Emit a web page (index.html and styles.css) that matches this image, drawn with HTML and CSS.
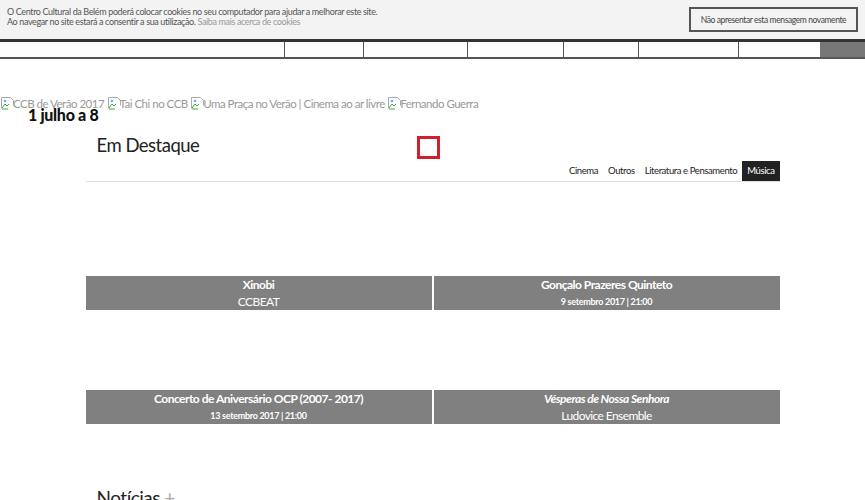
FILE: index.html
```html
<!DOCTYPE html>
<html lang="pt">
<head>
<meta charset="utf-8">
<title>CCB</title>
<link rel="stylesheet" href="styles.css">
</head>
<body>
<div class="cookie">
  <p class="cookie-text">O Centro Cultural da Belém poderá colocar cookies no seu computador para ajudar a melhorar este site.<br>Ao navegar no site estará a consentir a sua utilização. <a class="cookie-link" href="#">Saiba mais acerca de cookies</a></p>
  <button class="cookie-btn">Não apresentar esta mensagem novamente</button>
</div>
<nav class="nav">
  <span class="nav-cell c1"></span>
  <span class="nav-cell c2"></span>
  <span class="nav-cell c3"></span>
  <span class="nav-cell c4"></span>
  <span class="nav-cell c5"></span>
  <span class="nav-cell c6"></span>
  <span class="nav-cell c7"></span>
  <span class="nav-cell c8"></span>
</nav>
<div class="slider">
  <div class="strip">
    <span class="broken"><svg class="bi" viewBox="0 0 16 16" width="16" height="16"><path d="M1.5 1.5h9l3 3v5" fill="none" stroke="#aaa"/><path d="M1.5 1.5v11" fill="none" stroke="#aaa"/><path d="M2 12l3-4 2 2 2-2" fill="none" stroke="#4a4"/><path d="M2 13h6" stroke="#4a4"/><circle cx="5" cy="5" r="1.3" fill="#6af"/></svg>CCB de Verão 2017</span>
    <span class="broken"><svg class="bi" viewBox="0 0 16 16" width="16" height="16"><path d="M1.5 1.5h9l3 3v5" fill="none" stroke="#aaa"/><path d="M1.5 1.5v11" fill="none" stroke="#aaa"/><path d="M2 12l3-4 2 2 2-2" fill="none" stroke="#4a4"/><path d="M2 13h6" stroke="#4a4"/><circle cx="5" cy="5" r="1.3" fill="#6af"/></svg>Tai Chi no CCB</span>
    <span class="broken"><svg class="bi" viewBox="0 0 16 16" width="16" height="16"><path d="M1.5 1.5h9l3 3v5" fill="none" stroke="#aaa"/><path d="M1.5 1.5v11" fill="none" stroke="#aaa"/><path d="M2 12l3-4 2 2 2-2" fill="none" stroke="#4a4"/><path d="M2 13h6" stroke="#4a4"/><circle cx="5" cy="5" r="1.3" fill="#6af"/></svg>Uma Praça no Verão | Cinema ao ar livre</span>
    <span class="broken"><svg class="bi" viewBox="0 0 16 16" width="16" height="16"><path d="M1.5 1.5h9l3 3v5" fill="none" stroke="#aaa"/><path d="M1.5 1.5v11" fill="none" stroke="#aaa"/><path d="M2 12l3-4 2 2 2-2" fill="none" stroke="#4a4"/><path d="M2 13h6" stroke="#4a4"/><circle cx="5" cy="5" r="1.3" fill="#6af"/></svg>Fernando Guerra</span>
  </div>
  <div class="slide-caption">1 julho a 8</div>
</div>
<main class="main">
  <div class="section-head">
    <h2 class="section-title">Em Destaque</h2>
    <span class="red-box"></span>
  </div>
  <div class="tabs">
    <a class="tab" href="#">Cinema</a>
    <a class="tab" href="#">Outros</a>
    <a class="tab" href="#">Literatura e Pensamento</a>
    <a class="tab active" href="#">Música</a>
  </div>
  <div class="cards">
    <div class="card">
      <div class="card-img"></div>
      <div class="card-cap"><div class="cap-title">Xinobi</div><div class="cap-sub">CCBEAT</div></div>
    </div>
    <div class="card">
      <div class="card-img"></div>
      <div class="card-cap"><div class="cap-title">Gonçalo Prazeres Quinteto</div><div class="cap-date">9 setembro 2017 | 21:00</div></div>
    </div>
    <div class="card">
      <div class="card-img"></div>
      <div class="card-cap"><div class="cap-title">Concerto de Aniversário OCP (2007- 2017)</div><div class="cap-date">13 setembro 2017 | 21:00</div></div>
    </div>
    <div class="card">
      <div class="card-img"></div>
      <div class="card-cap"><div class="cap-title"><em>Vésperas de Nossa Senhora</em></div><div class="cap-sub">Ludovice Ensemble</div></div>
    </div>
  </div>
  <h2 class="section-title news">Notícias <span class="plus">+</span></h2>
</main>
</body>
</html>
```
FILE: styles.css
```css
* { box-sizing: border-box; }
body {
  margin: 0;
  font-family: Lato, "Open Sans", sans-serif;
  color: #222;
  background: #fff;
}
.cookie {
  background: #f3f3f3;
  height: 39px;
  display: flex;
  justify-content: space-between;
  align-items: flex-start;
  padding: 7px 7px 0 7px;
}
.cookie-text {
  margin: 0;
  font-size: 9px;
  line-height: 10px;
  letter-spacing: -0.37px;
  color: #555;
}
.cookie-link { color: #999; text-decoration: none; }
.cookie-btn {
  margin-top: 0;
  width: 169px;
  height: 25px;
  background: #f3f3f3;
  border: 2px solid #555;
  font-family: inherit;
  font-size: 8.5px;
  letter-spacing: -0.4px;
  color: #444;
  padding: 0;
}
.nav {
  display: flex;
  height: 20px;
  border-top: 3px solid #333;
  border-bottom: 2px solid #555;
}
.nav-cell { border-right: 1px solid #555; }
.c1 { width: 285px; }
.c2 { width: 79px; }
.c3 { width: 104px; }
.c4 { width: 96px; }
.c5 { width: 75px; }
.c6 { width: 100px; }
.c7 { width: 81px; border-right: 0; }
.c8 { flex: 1; background: #777; border-right: 0; }
.slider {
  position: relative;
  margin-top: 37px;
  height: 37px;
}
.strip {
  font-size: 11.5px;
  line-height: 16px;
  letter-spacing: -0.5px;
  color: #999;
  white-space: nowrap;
}
.broken { display: inline-flex; align-items: center; }
.bi { flex: none; margin-right: -3px; }
.slide-caption {
  position: absolute;
  left: 28px;
  top: 9px;
  font-size: 16px;
  font-weight: 900;
  letter-spacing: -0.3px;
  color: #111;
}
.main {
  width: 694px;
  margin: 0 auto;
}
.section-head {
  display: flex;
  align-items: center;
  height: 26px;
  padding-left: 11px;
}
.section-title {
  margin: 0;
  font-size: 18.5px;
  letter-spacing: -0.5px;
  font-weight: 400;
  color: #222;
}
.section-head .section-title { width: 320px; margin-top: -3px; }
.red-box {
  width: 23px;
  height: 23px;
  border: 3px solid #d21f2b;
  margin-top: 2px;
}
.tabs {
  display: flex;
  justify-content: flex-end;
  align-items: center;
  margin-top: 1px;
  height: 22px;
  border-bottom: 1px solid #ddd;
  font-size: 9.5px;
  letter-spacing: -0.4px;
}
.tab {
  color: #222;
  text-decoration: none;
  padding: 0 5px;
  line-height: 20px;
}
.tab.active { background: #222; color: #fff; }
.cards {
  margin-top: 14px;
  display: grid;
  grid-template-columns: 1fr 1fr;
  column-gap: 2px;
}
.card-img { height: 80px; }
.card-cap {
  background: #808080;
  height: 34px;
  color: #fff;
  text-align: center;
  padding-top: 1px;
}
.cap-title { font-size: 12px; font-weight: 700; line-height: 16px; letter-spacing: -0.5px; }
.cap-sub { font-size: 12px; line-height: 16px; letter-spacing: -0.6px; margin-top: 1px; }
.cap-date { font-size: 9px; font-weight: 700; line-height: 16px; letter-spacing: -0.3px; margin-top: 1px; }
.news { margin: 62px 0 0 11px; font-size: 19px; }
.plus { color: #aaa; }
```
